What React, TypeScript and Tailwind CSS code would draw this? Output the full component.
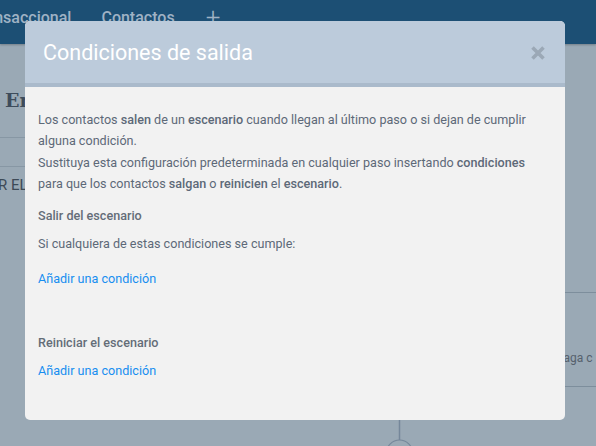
const font = { fontFamily: "Roboto, 'Liberation Sans', sans-serif" };

const CloseIcon = () => (
  <svg width="16" height="16" viewBox="0 0 16 16">
    <path
      d="M2.5 2.5 L13.5 13.5 M13.5 2.5 L2.5 13.5"
      stroke="#9ba8b6"
      strokeWidth="3.6"
      strokeLinecap="butt"
    />
  </svg>
);

const Background = () => {
  return (
    <div className="flex flex-col h-[446px] w-[596px] bg-[#9aa9b5] overflow-hidden">
      <div className="h-[44px] shrink-0 bg-[#1c4f74] flex items-start pt-[6px] text-[16px] font-medium text-[#9fb2c4] shadow-[0_1px_2px_rgba(0,0,0,0.25)]">
        <span className="-ml-[29px]">Transaccional</span>
        <span className="ml-[30px]">Contactos</span>
        <span className="ml-[31px] text-[26px] leading-[22px] font-light">+</span>
      </div>
      <div className="flex flex-1">
        <div className="w-[40px] flex flex-col">
          <div
            className="pt-[42px] pl-[5px] text-[19px] font-bold text-[#3e4c5b] h-[93px]"
            style={{ fontFamily: "'DejaVu Serif', serif" }}
          >
            Em
          </div>
          <div className="border-t border-[#8797a4] h-[29px]" />
          <div className="border-t border-[#8797a4] pt-[7px] text-[15px] text-[#3d4a57] whitespace-nowrap -ml-[2px]">
            R EL
          </div>
        </div>
        <div className="flex-1" />
        <div className="w-[40px] flex flex-col">
          <div className="h-[248px]" />
          <div className="border-t border-[#7d8e9c] h-[94px] pt-[56px] text-[12px] text-[#56616d] whitespace-nowrap -ml-[1px]">
            Haga c
          </div>
          <div className="border-t border-[#7d8e9c]" />
        </div>
      </div>
    </div>
  );
};

const App = () => {
  return (
    <div className="relative w-[596px] h-[446px] overflow-hidden" style={font}>
      <Background />
      {/* connector under the modal */}
      <svg className="absolute left-[380px] top-[418px]" width="40" height="30" viewBox="0 0 40 30">
        <path d="M19.5 0 V22" stroke="#75879a" strokeWidth="1.5" />
        <circle cx="19.5" cy="35" r="13" fill="none" stroke="#75879a" strokeWidth="1.2" />
      </svg>

      <div className="absolute left-[25px] top-[21px] w-[540px] h-[399px] rounded-[5px] bg-[#f2f2f2] overflow-hidden flex flex-col">
        <div className="h-[66px] shrink-0 bg-[#bccbdb] border-b-4 border-[#aabacb] flex items-center justify-between pl-[18px] pr-[19px] pt-[2px]">
          <h2 className="text-[21.5px] text-white font-normal">Condiciones de salida</h2>
          <CloseIcon />
        </div>
        <div className="px-[13px] pt-[22px] text-[12.6px] text-[#5d6978] leading-[21.3px]">
          <p>
            Los contactos <span className="font-medium">salen</span> de un{" "}
            <span className="font-medium">escenario</span> cuando llegan al último paso o si dejan de cumplir
            alguna condición.
            <br />
            Sustituya esta configuración predeterminada en cualquier paso insertando{" "}
            <span className="font-medium">condiciones</span> para que los contactos{" "}
            <span className="font-medium">salgan</span> o <span className="font-medium">reinicien</span> el{" "}
            <span className="font-medium">escenario</span>.
          </p>
          <div className="leading-[21px]">
            <p className="mt-[11px] font-medium text-[#646d78]">Salir del escenario</p>
            <p className="mt-[7px]">Si cualquiera de estas condiciones se cumple:</p>
            <p className="mt-[14px] text-[#178ef0] cursor-pointer">Añadir una condición</p>
            <p className="mt-[43px] font-medium text-[#646d78]">Reiniciar el escenario</p>
            <p className="mt-[7px] text-[#178ef0] cursor-pointer">Añadir una condición</p>
          </div>
        </div>
      </div>
    </div>
  );
};

export default App;
